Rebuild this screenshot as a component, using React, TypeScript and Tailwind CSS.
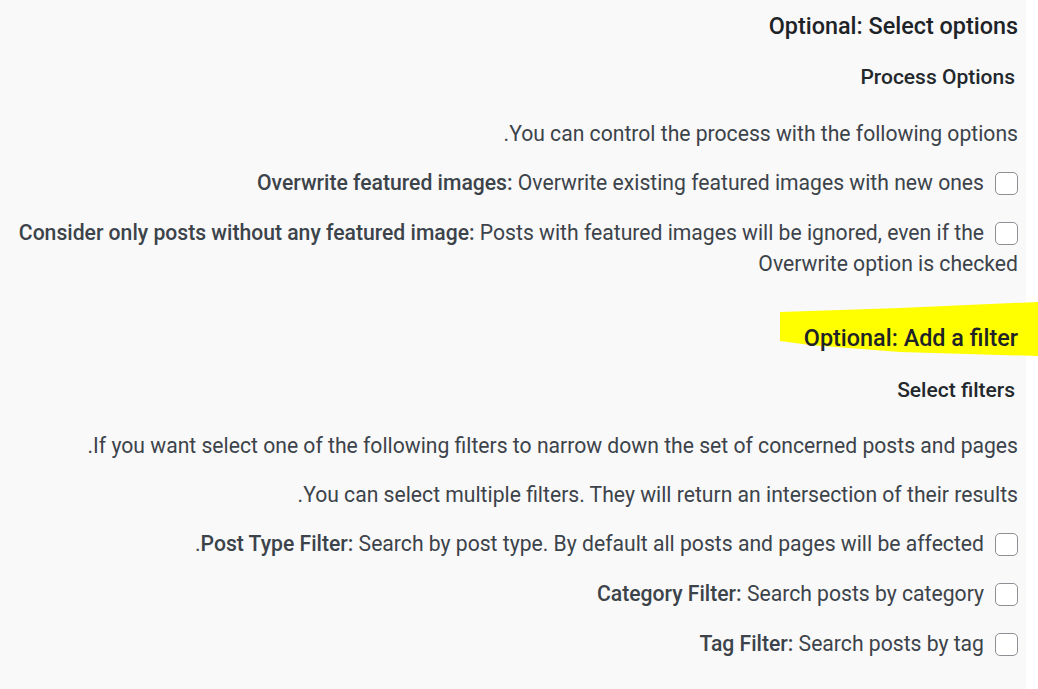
import { ReactNode } from "react"

function Check() {
    return (
        <input
            type="checkbox"
            className="ml-[11px] inline-block h-[23px] w-[23px] cursor-pointer appearance-none rounded-[5px] border border-[#8c8f94] bg-white align-[-5px]"
        />
    )
}

function Option({ label, children, className = "" }: { label: string; children: ReactNode; className?: string }) {
    return (
        <p className={`text-[21.15px] leading-[31px] text-[#3c434a] ${className}`}>
            <label>
                <Check />
                <strong className="font-medium">{label}</strong> {children}
            </label>
        </p>
    )
}

export default function App() {
    return (
        <div
            className="flex h-[689px] w-[1038px] overflow-hidden bg-white"
            style={{ fontFamily: "Roboto, 'Noto Sans', sans-serif" }}
        >
            <div dir="rtl" className="relative w-[1026px] bg-[#f9f9f9] pr-[8px] pt-[10px]">
                <svg
                    className="absolute left-[780px] top-[302px]"
                    width="258"
                    height="56"
                    viewBox="780 302 258 56"
                >
                    <polygon
                        points="780,312 900,308 1038,302 1038,356 900,352 810,345 780,341"
                        fill="#ffff00"
                    />
                </svg>

                <h2 className="text-[23.4px] font-medium leading-[32px] text-[#1d2327]">
                    Optional: Select options
                </h2>
                <h3 className="mt-[20px] pr-[3px] text-[21px] font-medium leading-[31px] text-[#23282d]">
                    Process Options
                </h3>
                <p className="mt-[25px] text-[21.15px] leading-[31px] text-[#3c434a]">
                    You can control the process with the following options.
                </p>
                <Option label="Overwrite featured images:" className="mt-[18px]">
                    Overwrite existing featured images with new ones
                </Option>
                <Option label="Consider only posts without any featured image:" className="mt-[19px]">
                    Posts with featured images will be ignored, even if the Overwrite option is checked
                </Option>

                <h2 className="relative mt-[43px] text-[23.4px] font-medium leading-[32px] text-[#1d2327]">
                    Optional: Add a filter
                </h2>
                <h3 className="mt-[21px] pr-[3px] text-[21px] font-medium leading-[31px] text-[#23282d]">
                    Select filters
                </h3>
                <p className="mt-[24px] text-[21.15px] leading-[31px] text-[#3c434a]">
                    If you want select one of the following filters to narrow down the set of concerned posts and pages.
                </p>
                <p className="mt-[18px] text-[21.15px] leading-[31px] text-[#3c434a]">
                    You can select multiple filters. They will return an intersection of their results.
                </p>
                <Option label="Post Type Filter:" className="mt-[18px]">
                    Search by post type. By default all posts and pages will be affected.
                </Option>
                <Option label="Category Filter:" className="mt-[19px]">
                    Search posts by category
                </Option>
                <Option label="Tag Filter:" className="mt-[19px]">
                    Search posts by tag
                </Option>
            </div>
        </div>
    )
}
